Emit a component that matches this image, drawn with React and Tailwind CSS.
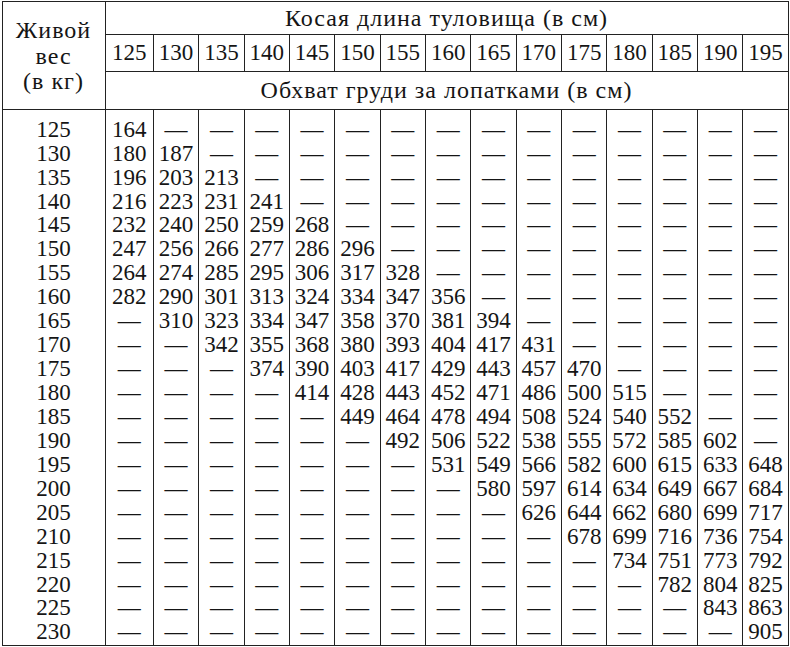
import React from 'react';

const lengths = [125, 130, 135, 140, 145, 150, 155, 160, 165, 170, 175, 180, 185, 190, 195];

// row weight -> first column index with a value, then the values
const rows = [
    [125, 0, [164]],
    [130, 0, [180, 187]],
    [135, 0, [196, 203, 213]],
    [140, 0, [216, 223, 231, 241]],
    [145, 0, [232, 240, 250, 259, 268]],
    [150, 0, [247, 256, 266, 277, 286, 296]],
    [155, 0, [264, 274, 285, 295, 306, 317, 328]],
    [160, 0, [282, 290, 301, 313, 324, 334, 347, 356]],
    [165, 1, [310, 323, 334, 347, 358, 370, 381, 394]],
    [170, 2, [342, 355, 368, 380, 393, 404, 417, 431]],
    [175, 3, [374, 390, 403, 417, 429, 443, 457, 470]],
    [180, 4, [414, 428, 443, 452, 471, 486, 500, 515]],
    [185, 5, [449, 464, 478, 494, 508, 524, 540, 552]],
    [190, 6, [492, 506, 522, 538, 555, 572, 585, 602]],
    [195, 7, [531, 549, 566, 582, 600, 615, 633, 648]],
    [200, 8, [580, 597, 614, 634, 649, 667, 684]],
    [205, 9, [626, 644, 662, 680, 699, 717]],
    [210, 10, [678, 699, 716, 736, 754]],
    [215, 11, [734, 751, 773, 792]],
    [220, 12, [782, 804, 825]],
    [225, 13, [843, 863]],
    [230, 14, [905]],
];

const cell = (row, col) => {
    const [, start, vals] = row;
    const i = col - start;
    return i >= 0 && i < vals.length ? vals[i] : '—';
};

const colClass = (i) =>
    i === 0 ? 'w-[48.4px] border-l' : i === lengths.length - 1 ? 'flex-1 border-l' : 'w-[45.35px] border-l';

export default function App() {
    return (
        <div className="w-[790px] h-[647px] bg-white text-[#151515] font-['Liberation_Serif',serif] text-[23px]">
            <div className="ml-[1.5px] mt-px w-[787px] border border-[#222]">
                {/* header */}
                <div className="flex border-b border-[#222]">
                    <div className="w-[102px] h-[107px] pt-[2px] flex flex-col items-center justify-center leading-[25.5px] text-[24px] tracking-[1px]">
                        <span>Живой</span>
                        <span>вес</span>
                        <span>(в кг)</span>
                    </div>
                    <div className="flex-1 flex flex-col border-l border-[#222]">
                        <div className="h-[33px] border-b border-[#222] flex items-center justify-center text-[24px] tracking-[1px]">
                            Косая длина туловища (в см)
                        </div>
                        <div className="h-[37px] border-b border-[#222] flex">
                            {lengths.map((l, i) => (
                                <div
                                    key={l}
                                    className={
                                        (i === 0 ? 'w-[47.4px]' : colClass(i)) +
                                        ' border-[#222] flex items-center justify-center'
                                    }
                                >
                                    {l}
                                </div>
                            ))}
                        </div>
                        <div className="h-[36px] flex items-center justify-center text-[24px] tracking-[1px]">
                            Обхват груди за лопатками (в см)
                        </div>
                    </div>
                </div>
                {/* body */}
                <div className="flex">
                    <div className="w-[102px] pt-[8px] flex flex-col">
                        {rows.map((r) => (
                            <div key={r[0]} className="h-[23.95px] flex items-center justify-center">
                                {r[0]}
                            </div>
                        ))}
                    </div>
                    {lengths.map((l, c) => (
                        <div key={l} className={colClass(c) + ' border-[#222] pt-[8px] flex flex-col'}>
                            {rows.map((r) => (
                                <div key={r[0]} className="h-[23.95px] flex items-center justify-center">
                                    {cell(r, c)}
                                </div>
                            ))}
                        </div>
                    ))}
                </div>
            </div>
        </div>
    );
}
